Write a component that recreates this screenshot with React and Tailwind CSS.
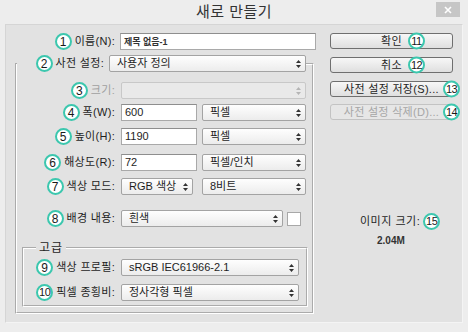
import React from "react";

const Num = ({ n, className = "" }) => (
  <span
    className={
      "inline-flex items-center justify-center w-[17px] h-[17px] rounded-full border-2 border-[#3cc7ae] bg-white leading-none text-[#1a1a1a] shrink-0 " +
      className
    }
  >
    {n}
  </span>
);

const Arrows = ({ c = "#333" }) => (
  <svg width="5" height="8" viewBox="0 0 5 8" className="shrink-0">
    <path d="M2.5 0L5 3H0z M0 5h5L2.5 8z" fill={c} />
  </svg>
);

const Select = ({ w, text, disabled = false, extra = "" }) => (
  <div
    className={
      w +
      " h-[17px] flex items-center justify-between pl-[7px] pr-[4px] rounded-[2px] border " +
      (disabled
        ? "border-[#c8c8c8] bg-[#e9e9e9] "
        : "border-[#a3a3a3] bg-linear-to-b from-[#fefefe] to-[#ececec] ") +
      extra
    }
  >
    <span className="leading-none whitespace-nowrap">{text}</span>
    <Arrows c={disabled ? "#b5b5b5" : "#333"} />
  </div>
);

const Input = ({ w, text, extra = "" }) => (
  <div
    className={
      w +
      " h-[17px] flex items-center pl-[3px] bg-white border border-[#a9a9a9] border-t-[#8e8e8e] " +
      extra
    }
  >
    <span className="leading-none whitespace-nowrap">{text}</span>
  </div>
);

const Label = ({ n, text, w, disabled = false, small = false }) => (
  <div className={w + " flex items-center justify-end gap-[3px] shrink-0"}>
    <Num n={n} className={small ? "text-[11px] tracking-[-0.5px]" : "text-[12px]"} />
    <span
      className={
        "leading-none whitespace-nowrap tracking-[0.3px] " +
        (disabled ? "text-[#a0a0a0]" : "text-[#1e1e1e]")
      }
    >
      {text}
    </span>
  </div>
);

const Button = ({ text, n, disabled = false, badgeLeft, extra = "" }) => (
  <div
    className={
      "relative h-[16px] w-[123px] flex items-center justify-center rounded-[3px] border " +
      (disabled
        ? "border-[#c3c3c3] bg-[#e6e6e6] text-[#a5a5a5] "
        : "border-[#6f6f6f] bg-linear-to-b from-[#f7f7f7] to-[#dfdfdf] text-[#1e1e1e] ") +
      extra
    }
  >
    <span className="leading-none whitespace-nowrap tracking-[0.3px]">{text}</span>
    <Num
      n={n}
      className={
        "absolute top-1/2 -translate-y-1/2 text-[11px] tracking-[-0.5px] " + badgeLeft
      }
    />
  </div>
);

export default function App() {
  return (
    <div className="w-[468px] h-[332px] bg-[#ededed] flex flex-col font-['Liberation_Sans','Noto_Sans_CJK_KR',sans-serif] text-[11px] text-[#1e1e1e] overflow-hidden">
      {/* Title bar */}
      <div className="relative h-[24px] shrink-0 flex items-center justify-center text-[15px] text-[#333] tracking-[0.5px]">
        새로 만들기
        <div className="absolute right-[8px] top-[2px] w-[24px] h-[15px] bg-[#c6c6c6] flex items-center justify-center">
          <svg width="8" height="8" viewBox="0 0 8 8">
            <path d="M1 1L7 7M7 1L1 7" stroke="#fff" strokeWidth="1.6" />
          </svg>
        </div>
      </div>

      {/* Panel */}
      <div className="mx-[5px] h-[299px] shrink-0 bg-[#e2e2e2] border border-[#d5d5d5] border-r-[#f4f4f4] border-b-[#f4f4f4] flex">
        {/* Left column */}
        <div className="w-[310px] shrink-0 flex flex-col">
          <div className="mt-[8px] flex items-center">
            <Label n="1" text="이름(N):" w="w-[109px]" />
            <Input
              w="w-[196px] ml-[5px]"
              text={<span className="text-[9px] font-bold text-[#333]">제목 없음-1</span>}
            />
          </div>

          <fieldset className="mt-[5px] ml-[9px] w-[299px] border-2 [border-style:groove] border-white pb-[5px]">
            <legend className="flex items-center">
              <Label n="2" text="사전 설정:" w="w-[87px]" />
              <Select w="w-[197px] ml-[5px]" text="사용자 정의" />
            </legend>

            <div className="mt-[10px] flex items-center">
              <Label n="3" text="크기:" w="w-[98px]" disabled />
              <Select w="w-[185px] ml-[6px]" text="" disabled />
            </div>

            <div className="mt-[5px] flex items-center">
              <Label n="4" text="폭(W):" w="w-[98px]" />
              <Input w="w-[76px] ml-[6px]" text="600" />
              <Select w="w-[104px] ml-[5px]" text="픽셀" />
            </div>

            <div className="mt-[7px] flex items-center">
              <Label n="5" text="높이(H):" w="w-[98px]" />
              <Input w="w-[76px] ml-[6px]" text="1190" />
              <Select w="w-[104px] ml-[5px]" text="픽셀" />
            </div>

            <div className="mt-[9px] flex items-center">
              <Label n="6" text="해상도(R):" w="w-[98px]" />
              <Input w="w-[76px] ml-[6px]" text="72" />
              <Select w="w-[104px] ml-[5px]" text="픽셀/인치" />
            </div>

            <div className="mt-[7px] flex items-center">
              <Label n="7" text="색상 모드:" w="w-[98px]" />
              <Select w="w-[72px] ml-[6px]" text="RGB 색상" />
              <Select w="w-[104px] ml-[9px]" text="8비트" />
            </div>

            <div className="mt-[15px] flex items-center">
              <Label n="8" text="배경 내용:" w="w-[98px]" />
              <Select w="w-[162px] ml-[6px]" text="흰색" />
              <div className="ml-[4px] w-[14px] h-[14px] bg-white border border-[#a8a8a8]" />
            </div>

            <fieldset className="mt-[14px] ml-[5px] w-[286px] border-2 [border-style:groove] border-white pb-[4px]">
              <legend className="ml-[12px] px-[3px] text-[12px] leading-[14px] tracking-[1px]">
                고급
              </legend>
              <div className="mt-[4px] flex items-center">
                <Label n="9" text="색상 프로필:" w="w-[91px]" />
                <Select w="w-[178px] ml-[6px]" text="sRGB IEC61966-2.1" />
              </div>
              <div className="mt-[8px] flex items-center">
                <Label n="10" text="픽셀 종횡비:" w="w-[91px]" small />
                <Select w="w-[178px] ml-[6px]" text="정사각형 픽셀" />
              </div>
            </fieldset>
          </fieldset>
        </div>

        {/* Right column */}
        <div className="ml-[14px] w-[123px] shrink-0 flex flex-col">
          <Button text="확인" n="11" badgeLeft="left-[77px]" extra="mt-[8px]" />
          <Button text="취소" n="12" badgeLeft="left-[77px]" extra="mt-[8px]" />
          <Button text="사전 설정 저장(S)..." n="13" badgeLeft="left-[112px]" extra="mt-[8px]" />
          <Button text="사전 설정 삭제(D)..." n="14" disabled badgeLeft="left-[112px]" extra="mt-[7px]" />

          <div className="mt-[93px] pl-[30px] flex items-center gap-[3px]">
            <span className="leading-none whitespace-nowrap tracking-[0.5px]">이미지 크기:</span>
            <Num n="15" className="text-[11px] tracking-[-0.5px]" />
          </div>
          <div className="mt-[5px] pl-[47px] text-[10px] font-bold leading-[12px] text-[#333]">
            2.04M
          </div>
        </div>
      </div>
    </div>
  );
}
